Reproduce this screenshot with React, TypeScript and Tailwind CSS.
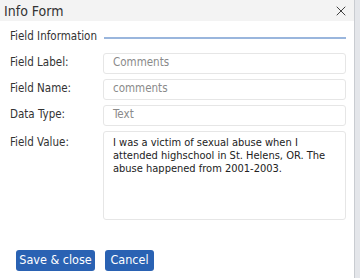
import { X } from 'lucide-react';

const fields = [
  { label: 'Field Label:', value: 'Comments' },
  { label: 'Field Name:', value: 'comments' },
  { label: 'Data Type:', value: 'Text' },
];

export default function App() {
  return (
    <div className="flex h-[278px] w-[360px] bg-[#e4e6ea] font-['DejaVu_Sans_Condensed','DejaVu_Sans',sans-serif] text-[#222]">
      <div className="flex w-[355px] flex-col border-r border-[#c9ccd1] bg-white">
        {/* Header */}
        <div className="flex h-[21px] items-center justify-between bg-[#f3f3f3] pl-[4px] pr-[5px]">
          <span className="text-[14px] leading-none text-[#333]">Info Form</span>
          <X size={16} strokeWidth={1.4} className="text-[#333]" />
        </div>

        {/* Section title */}
        <div className="mt-[10px] flex items-center gap-[7px] pl-[10px] pr-[8px]">
          <span className="text-[11.5px] leading-none text-[#333]">Field Information</span>
          <div className="mt-[2px] h-[2px] flex-1 bg-[#9ab6dd]" />
        </div>

        {/* Fields */}
        <div className="mt-[10px] flex flex-col gap-[5px] pl-[10px] pr-[8px]">
          {fields.map(f => (
            <div key={f.label} className="flex items-center">
              <span className="w-[93px] text-[11.5px] text-[#333]">{f.label}</span>
              <div className="flex h-[21px] flex-1 items-center rounded-[3px] border border-[#e6e6e6] px-[9px] text-[11.5px] text-[#8a8a8a]">
                {f.value}
              </div>
            </div>
          ))}
          <div className="flex items-start">
            <span className="w-[93px] pt-[3px] text-[11.5px] text-[#333]">Field Value:</span>
            <div className="h-[89px] flex-1 rounded-[3px] border border-[#e6e6e6] px-[9px] py-[4px] text-[11px] leading-[13px] text-[#222]">
              I was a victim of sexual abuse when I attended highschool in St. Helens, OR. The abuse happened from 2001-2003.
            </div>
          </div>
        </div>

        {/* Buttons */}
        <div className="mt-[30px] flex gap-[10px] pl-[16px]">
          <button className="h-[21px] w-[79px] rounded-[3px] bg-[#2a62b3] text-[12.5px] text-white">Save &amp; close</button>
          <button className="h-[21px] w-[49px] rounded-[3px] bg-[#2a62b3] text-[12.5px] text-white">Cancel</button>
        </div>
      </div>
    </div>
  );
}
